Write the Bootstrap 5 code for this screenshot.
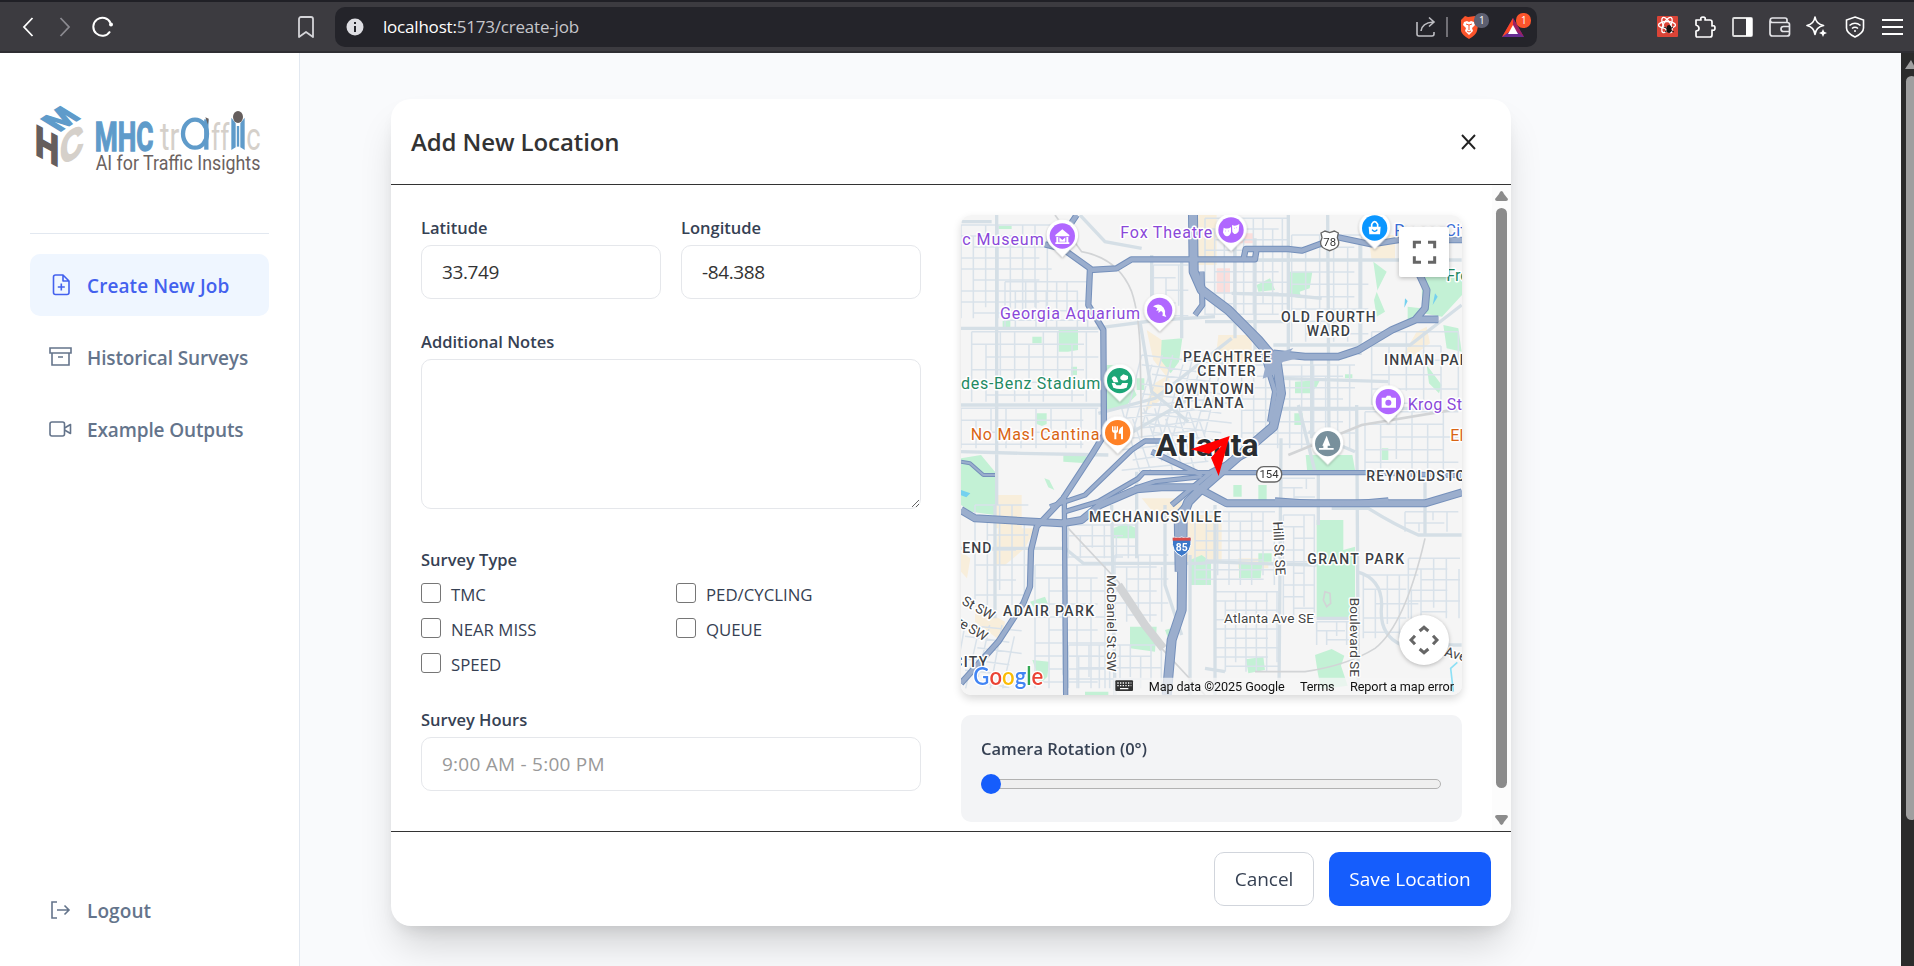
<!DOCTYPE html>
<html lang="en">
<head>
<meta charset="utf-8">
<title>Create Job</title>
<link href="https://cdn.jsdelivr.net/npm/bootstrap@5.3.0/dist/css/bootstrap.min.css" rel="stylesheet">
<script src="https://cdn.jsdelivr.net/npm/bootstrap@5.3.0/dist/js/bootstrap.bundle.min.js"></script>
<style>
html,body{height:966px;overflow:hidden}
body{font-family:"Open Sans","Noto Sans",sans-serif;font-size:19px;letter-spacing:-.4px;background:#f9fafc;color:#333}
svg{display:block;flex:none}
.chrome{height:53px;background:#3c3b40;border-top:2px solid #202026;border-bottom:2px solid #2f2e33;padding-left:9px;padding-right:3px}
.slot{width:37.5px;display:flex;justify-content:center;flex:none}
.urlbar{width:1202px;height:40px;margin-left:10px;background:#24242a;border-radius:10px;font-size:17px;letter-spacing:-.2px;color:#c6c6cb}
.side{width:300px;background:#fff;border-right:1px solid #e2e8f0;padding:0 30px 0}
.logo-wrap{height:181px;border-bottom:1px solid #e2e8f0;margin-bottom:20px}
.menu-item{height:62px;padding:2px 10px 0 19px;gap:15px;border-radius:10px;margin-bottom:10px;color:#64748b;font-weight:600;font-size:19px;letter-spacing:-.13px;text-decoration:none;white-space:nowrap}
.menu-item.on{background:#eff6ff;color:#4361ee;letter-spacing:.1px}
.menu-item svg{position:relative;top:-1px}
.stage{padding:46px 0 0 91px}
.panel{width:1120px;height:827px;border-radius:20px;background:#fff;box-shadow:0 25px 38px -8px rgba(0,0,0,.17),0 8px 15px -6px rgba(0,0,0,.1)}
.panel-head{height:86px;border-bottom:1px solid #333;padding:2px 33px 0 20px}
.panel-head h2{font-size:24px;font-weight:600;letter-spacing:-.1px;margin:0}
.panel-body{height:646px}
.left-form{width:500px;margin:30px 0 0 30px}
.lab{display:block;height:25px;line-height:25px;font-size:16.5px;font-weight:600;color:#364153;letter-spacing:0}
.box{height:54px;border:1px solid #e5e7eb;border-radius:10px;padding:0 20px;font-size:19px;letter-spacing:-.4px;color:#333;display:block;width:100%;background:#fff}
.box::placeholder{color:#999;opacity:1;letter-spacing:.25px}
textarea.box{height:150px}
.checks{row-gap:10px}
.checks>label{height:25px;gap:10px;font-size:16.8px;letter-spacing:0;color:#364153;line-height:25px}
.checks input{appearance:none;width:20px;height:20px;border:1.3px solid #767676;border-radius:3px;margin:0 0 3px;background:#fff}
.c1{width:255px}.c2{width:245px}
.right-col{width:501px;margin:30px 0 0 40px}
.map-wrap{width:501px;height:480px;border-radius:10px;overflow:hidden}
.map-shadow{border-radius:10px;box-shadow:0 4px 8px rgba(0,0,0,.15)}
.cam{margin-top:20px;height:107px;border-radius:10px;background:#f3f4f6;padding:20px 20px 0}
.track{height:10px;width:460px;border:1px solid #b2b2b2;border-radius:5px;background:#efefef;margin-top:19px}
.thumb{width:20px;height:20px;border-radius:50%;background:#155dfc;margin:-6px 0 0 -1px}
.bar-y{width:19px;background:#fcfcfc;margin-left:auto}
.bar-thumb{width:11px;height:580px;border-radius:6px;background:#8b8b8b}
.panel-foot{border-top:1px solid #333;height:95px;padding:20px 20px 0;gap:15px}
.panel-foot .btn{height:54px;border-radius:10px;font-size:19px;font-weight:500;padding:0;letter-spacing:-.02px}
.b-cancel{width:100px;border:1px solid #d1d5dc;color:#364153;background:#fff}
.b-save{width:162px;background:#155dfc;color:#fff}
.page-bar{width:13px;background:#2b2b2b;overflow:hidden}
.page-thumb{width:11px;height:744px;background:#9f9f9f;border-radius:6px;margin:7px 0 0 5px}
.mlab text{font-family:Roboto,sans-serif;paint-order:stroke;stroke:#fff;stroke-width:9px;stroke-linejoin:round;letter-spacing:0}
</style>
</head>
<body class="d-flex flex-column">
<header class="chrome d-flex align-items-center">
  <span class="slot"><svg width="12" height="20" fill="none" stroke="#fff" stroke-width="1.8"><path d="M10.500 1L2 10l8.500 9"/></svg></span>
  <span class="slot"><svg width="12" height="20" fill="none" stroke="#8b8a90" stroke-width="1.8"><path d="M1.500 1L10 10l-8.500 9"/></svg></span>
  <span class="slot"><svg width="24" height="22" fill="none" stroke="#fff" stroke-width="2"><path d="M19 15.500A9 9 0 1 1 19.500 7"/><circle cx="20" cy="8.500" r="2" fill="#fff" stroke="none"/></svg></span>
  <span class="slot" style="margin-left:166px"><svg width="16" height="22" fill="none" stroke="#d4d4d8" stroke-width="1.800" stroke-linejoin="round"><path d="M1 3a2 2 0 0 1 2-2h10a2 2 0 0 1 2 2v18l-7-5-7 5z"/></svg></span>
  <div class="urlbar d-flex align-items-center">
    <svg class="ms-2" width="24" height="20"><circle cx="12" cy="10" r="8.500" fill="#dedee3"/><path d="M12 9v6M12 5v2" stroke="#24242a" stroke-width="2"/></svg>
    <span style="margin-left:16px"><span class="text-white">localhost:</span>5173/create-job</span>
    <svg class="ms-auto" width="22" height="22" fill="none" stroke="#bdbdc2" stroke-width="1.600"><path d="M2 6v12a2 2 0 0 0 2 2h13a2 2 0 0 0 2-2v-2M6 15q1-8 12-9M14 1.500L19 6l-5 4.500"/></svg>
    <svg width="20" height="22"><path d="M10 1v20" stroke="#8b8a90" stroke-width="1.500"/></svg>
    <svg width="32" height="32"><path d="M4 9l4-4 3 1 7-1 4 5-2 10q-1 4-8 8q-7-4-8-8z" fill="#fb542b"/><path d="M7 11l3-1 2 1 2-1 3 1 1 3-3 3 1 3-4 4-4-4 1-3-3-3z" fill="#fff"/><path d="M9 13l3 1 3-1M12 14v5M10 20l2 1 2-1" stroke="#fb542b" fill="none"/><rect x="17" y="2" width="15" height="15" rx="7" fill="#5d5f70"/><text x="22" y="13" font-size="10" fill="#fff">1</text></svg>
    <svg style="margin:0 4px 0 10px" width="34" height="32"><path d="M3 26L14 7l11 19z" fill="#662d91"/><path d="M3 26L14 7v11z" fill="#ff4724"/><path d="M14 7l11 19-11-8z" fill="#9e1f63"/><path d="M9 23l5-9 5 9z" fill="#fff"/><rect x="17" y="2" width="15" height="15" rx="7" fill="#fb542b"/><text x="22" y="13" font-size="10" fill="#fff">1</text></svg>
  </div>
  <span class="slot ms-auto"><svg width="21" height="21"><rect width="21" height="21" rx="1" fill="#db4437"/><g fill="none" stroke="#fff" stroke-width="1.300"><ellipse cx="10" cy="9" rx="8.500" ry="3.500"/><ellipse cx="10" cy="9" rx="8.500" ry="3.500" transform="rotate(60 10 9)"/><ellipse cx="10" cy="9" rx="8.500" ry="3.500" transform="rotate(120 10 9)"/></g><ellipse cx="12" cy="13" rx="2.500" ry="4" fill="#111"/><path d="M7 11l10 5M8 16l8-5" stroke="#111"/></svg></span>
  <span class="slot"><svg width="22" height="22" fill="none" stroke="#fff" stroke-width="1.700" stroke-linejoin="round"><path d="M2 4h5q-1-3 2-3t2 3h5q2 0 2 2v4q3-1 3 2t-3 2v5q0 2-2 2H3q-1 0-1-2v-4q3 0 3-2.500T2 9z"/></svg></span>
  <span class="slot"><svg width="21" height="20"><rect x="1" y="1" width="19" height="18" rx="1" fill="none" stroke="#ddd" stroke-width="1.800"/><path d="M14 1h6v18h-6z" fill="#fff"/></svg></span>
  <span class="slot"><svg width="22" height="20" fill="none" stroke="#e4e4e8" stroke-width="1.700"><path d="M18 5V3q0-2-2-2H3.500a2 2 0 0 0 0 4.500H18q2.500 0 2.500 2V17q0 2-2.500 2H3.500Q1 19 1 16.500V3.500M21 9.500h-6.500q-2.500 0-2.500 2.500t2.500 2.500H21"/></svg></span>
  <span class="slot"><svg width="22" height="22"><path d="M9 1q1 7 8.500 8.500Q10 11 9 18.500 8 11 1 9.500 8 8 9 1z" fill="none" stroke="#fff" stroke-width="1.700" stroke-linejoin="round"/><path d="M17 13l1.200 2.800L21 17l-2.800 1.200L17 21l-1.200-2.800L13 17l2.800-1.200z" fill="#fff"/></svg></span>
  <span class="slot"><svg width="20" height="22" fill="none" stroke="#fff" stroke-width="1.600"><path d="M10 1l8.500 3v8q0 5-8.500 9-8.500-4-8.500-9V4z"/><path d="M4.500 9.500q5.500-4.500 11 0M7 12.500q3-2.500 6 0"/><circle cx="10" cy="15" r="1" fill="#fff" stroke="none"/></svg></span>
  <span class="slot"><svg width="21" height="18" stroke="#fff" stroke-width="2"><path d="M0 2h21M0 9h21M0 16h21"/></svg></span>
</header>

<div class="d-flex flex-grow-1">
  <aside class="side d-flex flex-column">
    <div class="logo-wrap">
      <!-- MHC cube and wordmark, three units to the pixel -->
      <svg width="240" height="180" viewBox="90 -81 720 540" font-family="Roboto" style="letter-spacing:0">
        <g font-family="Liberation Sans" font-weight="bold" font-size="100" stroke-width="5">
          <text transform="matrix(.82 -.53 .86 .53 177 157)" fill="#5f9bca" stroke="#5f9bca">M</text>
          <text transform="matrix(1 .54 0 1.280 105 222)" fill="#655e5d" stroke="#655e5d">H</text>
          <text transform="matrix(.96 -.58 0 1.240 181 258)" fill="#d5d0ca" stroke="#d5d0ca">C</text>
        </g>
        <text x="284" y="212" font-size="123" font-weight="bold" fill="#5f9bca" stroke="#5f9bca" stroke-width="4" textLength="176" lengthAdjust="spacingAndGlyphs">MHC</text>
        <text x="480" y="210" font-size="118" fill="#d5d0ca" textLength="58" lengthAdjust="spacingAndGlyphs">tr</text>
        <ellipse cx="585" cy="161" rx="36" ry="42" fill="none" stroke="#5f9bca" stroke-width="13"/>
        <path d="M619 118v91" stroke="#5f9bca" stroke-width="13"/><path d="M616 112l10 4-2 18z" fill="#655e5d"/>
        <text x="633" y="210" font-size="113" fill="#d5d0ca" textLength="55" lengthAdjust="spacingAndGlyphs">ff</text>
        <path d="M694 113l13 17v72l-13 8zM734 113l-13 17v72l13 8z" fill="#5f9bca"/><path d="M714 138v62" stroke="#5f9bca" stroke-width="7"/>
        <ellipse cx="714" cy="111" rx="15" ry="18" fill="#655e5d"/>
        <text x="739" y="210" font-size="115" fill="#d5d0ca" textLength="43" lengthAdjust="spacingAndGlyphs">c</text>
        <text x="287" y="270" font-size="60" fill="#6b6260" textLength="494" lengthAdjust="spacingAndGlyphs">AI for Traffic Insights</text>
      </svg>
    </div>
    <a class="menu-item on d-flex align-items-center"><svg width="23" height="22" fill="none" stroke="currentColor" stroke-width="1.600" stroke-linejoin="round"><path d="M4.500 3a2 2 0 0 1 2-2H14l6 6v11.500a2 2 0 0 1-2 2H6.500a2 2 0 0 1-2-2zM14 1v6h6M12.300 9.500v7M8.800 13h7"/></svg>Create New Job</a>
    <a class="menu-item d-flex align-items-center"><svg width="23" height="20" fill="none" stroke="currentColor" stroke-width="1.600"><path d="M1 1h21v5H1zM3 6v12h17V6M9 10h5"/></svg>Historical Surveys</a>
    <a class="menu-item d-flex align-items-center"><svg width="23" height="18" fill="none" stroke="currentColor" stroke-width="1.600" stroke-linejoin="round"><rect x="1" y="2" width="14.500" height="14" rx="2"/><path d="M15.500 8l6-3.500v9l-6-3.500"/></svg>Example Outputs</a>
    <a class="menu-item d-flex align-items-center mt-auto" style="margin-bottom:25px;letter-spacing:.1px"><svg width="23" height="20" fill="none" stroke="currentColor" stroke-width="1.600"><path d="M8 2H3v16h5M8 10h12M15.500 5.500L20 10l-4.500 4.500"/></svg>Logout</a>
  </aside>

  <main class="stage flex-grow-1">
    <section class="panel">
      <div class="panel-head d-flex align-items-center justify-content-between">
        <h2>Add New Location</h2>
        <svg width="18" height="20" stroke="#222" stroke-width="1.900"><path d="M2 2l13 14M15 2L2 16"/></svg>
      </div>
      <div class="panel-body d-flex">
        <form class="left-form">
          <div class="d-flex" style="gap:20px">
            <div class="flex-fill"><label class="lab mb-1">Latitude</label><input class="box" value="33.749" style="margin-top:5px"></div>
            <div class="flex-fill"><label class="lab mb-1">Longitude</label><input class="box" value="-84.388" style="margin-top:5px"></div>
          </div>
          <label class="lab" style="margin:30px 0 5px">Additional Notes</label>
          <textarea class="box"></textarea>
          <label class="lab" style="margin:38px 0 10px">Survey Type</label>
          <div class="checks d-flex flex-wrap">
            <label class="c1 d-flex align-items-center"><input type="checkbox">TMC</label>
            <label class="c2 d-flex align-items-center"><input type="checkbox">PED/CYCLING</label>
            <label class="c1 d-flex align-items-center"><input type="checkbox">NEAR MISS</label>
            <label class="c2 d-flex align-items-center"><input type="checkbox">QUEUE</label>
            <label class="c1 d-flex align-items-center"><input type="checkbox">SPEED</label>
          </div>
          <label class="lab" style="margin:30px 0 5px">Survey Hours</label>
          <input class="box" placeholder="9:00 AM - 5:00 PM">
        </form>
        <div class="right-col">
          <div class="map-shadow"><div class="map-wrap">
          <svg width="501" height="480" viewBox="18 30 1503 1440">
            <rect x="18" y="30" width="1503" height="1440" fill="#f5f5f5"/>
            <g fill="#f8eedb">
              <path d="M120 870h80v100h40l-30 60-60 50h-30l10-110h-10zM560 880h120v60h-70zM18 1040l28 20-10 60-18-20zM60 1200l90 50-10 60-80-60zM690 930h110v140H690zM575 375l60 40 20 70-20 30-40-50zM1240 90h80v75h-70zM1385 380l30-15 10 50-60 45-20-10zM790 390h100v90H780zM590 540l50-30 10 50-80 60zM725 30h60v150h-60zM850 1060h90v30h-90z"/>
            </g>
            <g fill="#fbdedc"><path d="M785 190h40v75h-40zM850 85h45v30h-45z"/></g>
            <g fill="#c3f1d5">
              <path d="M311 375h58v60l-30 5h-28zM232 395h28v20h-28zM143 348h23v18h-23zM130 62h40v10h-40zM348 485h18v25h-18zM245 625h30v32l-14 6-16-6zM455 480h50l40 90-40 40-50 10zM545 520h23v35h-23zM620 405l62-5-10 70-25 35-30-40zM18 760l60-10 50 60-10 120-70-10-30-20zM268 820l15 5 15 30-18-8zM325 750h70v25l-70-5zM475 970l35-15 35 15v30h-70zM705 1065l35-15 28 20v70h-60zM525 1265h80l-5 75-75-10zM225 1190l45-15 10 25-45 5zM232 1365l50 5-5 45-20 20zM390 1460h70v12h-70zM630 1275l35-10-20 50z"/>
              <path d="M905 240l40-20 15 35-50 5zM997 200h75l-8 50-30 10 5 20-42-8zM1255 170l40 30-30 60 25 60-25 15-8-50 10-30zM1358 305l40 5-20 40-80 35-30 10 90-50zM1400 210h121v60l-60 65-60-10zM1465 360l45 10 10 70-45-10zM1415 480l45 60-8 25-30-30zM1020 530l75-5-10 20-20 20h-45zM1018 625h25v35h-25zM1052 750h140l10 55h-145zM835 840h25v35h-25zM910 840h25v45h-25zM1085 945h80v90l35-10v215h-115zM910 1045h40v25h-40zM852 1075h70l-5 45h-65zM873 1363l52-8 5 40-50 10zM1080 1350l50-18 38 20-10 30 20 60-80 10-10-50zM1160 450h15v10h-15zM1170 508h22v12h-22zM1280 730h20v35h-20z"/>
            </g>
            <path d="M18 855l28 10-12 12-16-6zM1350 280l8 8-10 20zM1440 265l8 10-15 25z" fill="#74d1ef"/>
            <path id="minor" fill="none" stroke="#d9e2ea" stroke-width="4.500"/>
            <g fill="none" stroke="#d5dfe6" stroke-width="10">
              <path d="M125 30V900M18 370H420L610 345 780 335M18 600H440M18 50H110M120 900V1240M18 1030H330L385 1075H740L780 1070M18 740L200 745 460 750M590 150V340M680 170V400M555 350L590 560 700 650M470 900L480 1470M545 800V1060M630 900V1140L680 1290M705 1050V1470M375 30L450 110 560 130M1000 30V450M1070 450V700M900 100V440M840 30V400M1118 30L1122 700M1215 120V450M750 165H1520M830 265L1000 270 1100 280M750 350L1000 350M955 420H1365L1520 300M980 520L1300 530M960 610H1450M1205 600L1210 1460M1200 740L1060 680M978 700L972 1460M1090 800V960M1320 800L1410 820V990M780 900V1470M750 1390L810 1400M1130 910H1240Q1320 960 1390 990H1520M1205 1100Q1280 1120 1280 1200 1270 1290 1340 1320H1520M1085 1240H1205M750 1070L900 1075 1085 1080M430 625L600 580 830 400M500 700L740 560M1080 800L1060 720 1030 600"/>
            </g>
            <g fill="none" stroke="#d2d4d6" stroke-width="5"><path d="M300 30L380 140Q490 160 530 260 550 320 555 420L560 700M340 970L490 1130Q570 1270 620 1330L750 1470M1410 1000Q1350 1260 1260 1330 1180 1380 1050 1400H900"/><path d="M490 1140L570 1260 625 1330" stroke-width="25"/><path d="M1000 750L1220 660 1520 610" stroke-width="8"/><path d="M1110 1160l15 5 2 30-12 10-10-20z"/></g>
            <!-- freeways: casing first, then fill -->
            <g id="fwCase" fill="none" stroke="#7590bb" stroke-linejoin="round"></g>
            <g id="fwFill" fill="none" stroke="#9baecd" stroke-linejoin="round"></g>
            <path d="M980 441l35-12-12 15 40 12-60 15-20 35-40 15 10-45z" fill="#9baecd"/>
            <g class="mlab" font-size="48" fill="#8a48d9">
              <text x="22" y="119" textLength="244">c Museum</text><text x="496" y="98" textLength="276">Fox Theatre</text><text x="135" y="341" textLength="420">Georgia Aquarium</text>
              <text x="1358" y="615" textLength="206">Krog Stre</text>
              <text x="18" y="553" textLength="418" fill="#238a63">des-Benz Stadium</text><text x="47" y="706" textLength="386" fill="#d96514">No Mas! Cantina</text>
              <text x="1318" y="94" textLength="238" fill="#3b70d8">Ponce City</text><text x="1474" y="227" fill="#238a63">Fre</text><text x="1486" y="708" fill="#d96514">El</text>
            </g>
            <g class="mlab" font-size="42" font-weight="500" fill="#3b4045">
              <text x="978" y="352" textLength="284">OLD FOURTH</text><text x="1055" y="393" textLength="130">WARD</text>
              <text x="684" y="470" textLength="264">PEACHTREE</text><text x="727" y="512" textLength="175">CENTER</text>
              <text x="628" y="567" textLength="269">DOWNTOWN</text><text x="658" y="609" textLength="208">ATLANTA</text>
              <text x="1287" y="481" textLength="284">INMAN PARK</text><text x="1234" y="828" textLength="337">REYNOLDSTOW</text>
              <text x="402" y="951" textLength="397">MECHANICSVILLE</text><text x="22" y="1043" textLength="87">END</text>
              <text x="144" y="1234" textLength="273">ADAIR PARK</text><text x="1057" y="1076" textLength="290">GRANT PARK</text><text x="-5" y="1385" textLength="102">CITY</text>
            </g>
            <g class="mlab" font-size="41" fill="#444">
              <text x="807" y="1255" textLength="270">Atlanta Ave SE</text>
              <text transform="translate(456 1110) rotate(90)" textLength="290">McDaniel St SW</text>
              <text transform="translate(954 950) rotate(87)" textLength="162">Hill St SE</text>
              <text transform="translate(1186 1178) rotate(90)" textLength="238">Boulevard SE</text>
              <text transform="translate(18 1196) rotate(29)" textLength="105">St SW</text><text transform="translate(2 1258) rotate(31)" textLength="100">re SW</text>
              <text transform="translate(1466 1352) rotate(16)">Ave SE</text>
            </g>
            <g class="mlab"><text x="602" y="754" font-size="92" font-weight="700" textLength="309" lengthAdjust="spacingAndGlyphs" fill="#2a2d30">Atlanta</text></g>
            <path d="M824 693L707 733 762 746 800 722 768 758 791 813z" fill="#f00"/>
            <!-- place pins -->
            <defs><path id="pin" d="M0 59L-25 34A44 44 0 1 1 25 34Z"/></defs>
            <g stroke="#fff" stroke-width="7" style="filter:drop-shadow(0 3px 3px #0004)">
              <use href="#pin" x="322" y="93" fill="#fff"/><use href="#pin" x="828" y="75" fill="#fff"/><use href="#pin" x="614" y="316" fill="#fff"/><use href="#pin" x="494" y="527" fill="#fff"/><use href="#pin" x="488" y="683" fill="#fff"/><use href="#pin" x="1259" y="69" fill="#fff"/><use href="#pin" x="1300" y="590" fill="#fff"/><use href="#pin" x="1118" y="716" fill="#fff"/>
            </g>
            <g fill="#b067ff"><circle cx="322" cy="93" r="38"/><circle cx="828" cy="75" r="38"/><circle cx="614" cy="316" r="38"/><circle cx="1300" cy="590" r="38"/></g>
            <circle cx="494" cy="527" r="38" fill="#1ca677"/><circle cx="488" cy="683" r="38" fill="#ff8126"/><circle cx="1259" cy="69" r="38" fill="#0a96ff"/><circle cx="1118" cy="716" r="38" fill="#78909c"/>
            <g fill="#fff">
              <path d="M301 90l21-17 21 17v4h-42zM304 96h6v17h-6zM334 96h6v17h-6zM301 112h42v5h-42zM313 97l9 8 9-8v13h-18z"/>
              <path d="M806 68q12 6 22-2v16q-4 12-12 12t-12-12zM831 60q10 5 22-3l-2 22q-6 10-14 7l-5-5z"/>
              <path d="M594 304q20-12 32 4 6 8 4 20l4 8-12-4q4-10-4-14l-8 6 1-8-7 2 3-8z"/>
              <path d="M470 534h9l6 7h12l5-7h17l-4 14q-20 8-40 0zM470 520q8-12 16 0l4 12h-14zM496 515l9-7 14 5v9q-12 9-23 0z"/>
              <path d="M471 664h4v12h3v-12h4v12h3v-12h4v14q0 5-5 6v19h-6v-19q-7-1-7-7zM504 664v39h-6v-17h-7q0-18 13-22z"/>
              <path d="M1241 65h36l-2 23h-32z"/><path d="M1280 578h12l4-6h10l4 6h13v30h-43z"/>
              <path d="M1115 692l11 30h-8v7h18v5h-44v-5h13v-7h-3z"/>
            </g>
            <path d="M1250 66v-8q9-16 18 0v8" fill="none" stroke="#fff" stroke-width="5"/><path d="M1251 74q8 10 16 0" fill="none" stroke="#0a96ff" stroke-width="4"/><circle cx="1300" cy="593" r="9" fill="#b067ff"/>
            <path d="M812 78h1M820 78h1M838 70h1M845 68h1" stroke="#b067ff" stroke-width="4"/>
            <!-- route shields -->
            <g stroke="#666" stroke-width="4" fill="#fff"><path d="M1098 84l12-6 14 5 14-5 12 6-3 14q12 25-10 34l-13 5-13-5q-22-9-10-34z"/><rect x="905" y="785" width="75" height="46" rx="21"/></g>
            <g font-family="Roboto" font-size="34" fill="#333" text-anchor="middle" style="letter-spacing:0"><text x="1124" y="122">78</text><text x="942" y="819">154</text></g>
            <path d="M652 1000l5-4 12 3 11-3 11 3 12-3 5 4q4 40-28 54-32-14-28-54z" fill="#3b78c9" stroke="#fff" stroke-width="3"/><path d="M653 998h54v9h-54z" fill="#d94b48"/><text x="680" y="1039" font-family="Roboto" font-weight="bold" font-size="31" fill="#fff" text-anchor="middle" style="letter-spacing:0">85</text>
            <!-- map controls and attribution -->
            <path d="M475 1418H1521v52H475z" fill="#f5f5f5" opacity=".75"/>
            <path d="M1495 1460l-8-70 20-18" fill="none" stroke="#8ee0f5" stroke-width="5"/>
            <g style="filter:drop-shadow(0 3px 6px #0004)"><rect x="1332" y="66" width="150" height="150" rx="6" fill="#fff"/><circle cx="1407" cy="1305" r="75" fill="#fff"/></g>
            <g fill="none" stroke="#666" stroke-width="9"><path d="M1378 130v-18h20M1419 112h20v18M1439 154v18h-20M1398 172h-20v-18"/><path d="M1394 1278l13-11 13 11M1394 1332l13 11 13-11M1380 1292l-12 13 12 13M1434 1292l12 13-12 13"/></g>
            <rect x="481" y="1426" width="53" height="32" rx="3" fill="#333"/><path d="M487 1434h42M487 1442h42" stroke="#fff" stroke-width="4" stroke-dasharray="4 4"/><path d="M495 1451h25" stroke="#fff" stroke-width="4"/>
            <g font-family="Roboto" font-size="38" fill="#111" style="letter-spacing:0"><text x="581" y="1458" textLength="408">Map data ©2025 Google</text><text x="1035" y="1458" textLength="104">Terms</text><text x="1185" y="1458" textLength="312">Report a map error</text></g>
            <text x="55" y="1440" font-family="Lato" font-weight="600" font-size="72" textLength="210" lengthAdjust="spacingAndGlyphs" style="paint-order:stroke;letter-spacing:0" stroke="#fff" stroke-width="8"><tspan fill="#4285f4">G</tspan><tspan fill="#ea4335">o</tspan><tspan fill="#fbbc05">o</tspan><tspan fill="#4285f4">g</tspan><tspan fill="#34a853">l</tspan><tspan fill="#ea4335">e</tspan></text>
          </svg>
          </div></div>
          <div class="cam"><div class="lab" style="height:28px;line-height:28px">Camera Rotation (0°)</div><div class="track" style="margin-top:16px"><div class="thumb"></div></div></div>
        </div>
        <div class="bar-y d-flex flex-column align-items-center">
          <svg width="13" height="10" style="margin-top:6px" fill="#8b8b8b"><path d="M6.500 0Q8 0 9 3l4 5q0 2-2 2H2q-2 0-2-2l4-5Q5 0 6.500 0z"/></svg>
          <div class="bar-thumb" style="margin-top:7px"></div>
          <svg width="13" height="10" style="margin-top:27px" fill="#8b8b8b"><path d="M6.500 10Q8 10 9 7l4-5q0-2-2-2H2Q0 0 0 2l4 5q1 3 2.500 3z"/></svg>
        </div>
      </div>
      <div class="panel-foot d-flex justify-content-end">
        <button class="btn b-cancel">Cancel</button><button class="btn b-save">Save Location</button>
      </div>
    </section>
  </main>
  <div class="page-bar"><svg width="11" height="9" style="margin:7px 0 0 4px" fill="#9f9f9f"><path d="M6 0l5 9H0z"/></svg><div class="page-thumb"></div>
  </div>
</div>
<script>
// local street grids: x0, y0, x1, y1, column step, row step, slant
const grids=[[18,60,290,340,37,33,0],[50,380,430,590,43,38,0],[18,610,430,730,45,36,0],[150,230,400,370,31,29,0],[595,180,700,340,38,38,0],[750,40,1000,330,29,32,0],[1010,90,1240,410,42,37,0],[1250,380,1510,600,52,43,0],[860,480,1200,730,36,34,0],[1230,620,1510,800,47,38,0],[560,450,830,690,31,29,-60],[500,610,760,800,33,31,55],[60,900,220,1200,37,45,0],[240,1080,470,1450,42,39,0],[340,960,540,1060,36,32,0],[480,1050,640,1250,35,36,0],[340,1320,620,1450,31,34,0],[720,920,960,1140,34,29,0],[780,1160,970,1400,31,28,0],[985,930,1080,1240,31,35,0],[1085,1250,1200,1320,30,27,0],[1225,1110,1390,1300,36,43,0],[1350,920,1510,980,42,34,0],[1360,1060,1515,1240,38,32,0],[980,820,1080,880,37,28,0],[30,1260,200,1450,37,34,-35]];
let d='';
for(const [a,b,c,e,dx,dy,s] of grids){
 let n=0;
 for(let x=a;x<=c;x+=dx,n++){const top=b+(n%3===1?dy:0),end=e-(n%4===2?dy:0);d+=`M${x} ${top}L${x+s} ${end}`}
 n=0;
 for(let y=b;y<=e;y+=dy,n++){d+=`M${a+(n%3===2?dx:0)} ${y}L${c-(n%2?dx:0)} ${y-s*.5}`}
}
document.getElementById('minor').setAttribute('d',d);
const fw=[
[24,'M714 30L716 200 740 255 820 315 910 405 965 470 978 565 955 665 855 750 735 855 700 890 683 935 680 1215 650 1305 635 1470'],
[12,'M740 200L742 300 720 330M820 315L920 430 960 560 945 650M735 855L665 930 668 1100M900 735L770 800 650 900M590 740L740 810'],
[13,'M365 30L335 75V140L405 190 400 300 445 375 447 690 410 750 325 880 245 965 228 1035 225 1145 205 1195 130 1310 18 1435'],
[13,'M335 135L270 118M405 195L485 190 530 163H900L905 132 1000 132 1040 137 1150 97 1250 118 1330 105H1521M865 165L872 132H910'],
[17,'M955 445L1050 455H1150L1210 435 1310 375 1380 345 1410 310 1415 255 1385 190M1385 343H1450'],
[18,'M18 915L60 940 320 955 380 945 435 900 545 853 620 847H725L815 895H1410L1521 862'],
[10,'M328 870L332 1470'],
[10,'M285 905L390 870 530 735 570 708H650M330 920L430 890 550 820 565 803H1230L1521 812M540 850L600 830 740 815M960 885L1150 898 1300 885'],
[6,'M18 770L45 775 85 810H120']];
for(const [w,p] of fw){
 document.getElementById('fwCase').innerHTML+=`<path d="${p}" stroke-width="${w+6}"/>`;
 document.getElementById('fwFill').innerHTML+=`<path d="${p}" stroke-width="${w}"/>`;
}
</script>
</body>
</html>
